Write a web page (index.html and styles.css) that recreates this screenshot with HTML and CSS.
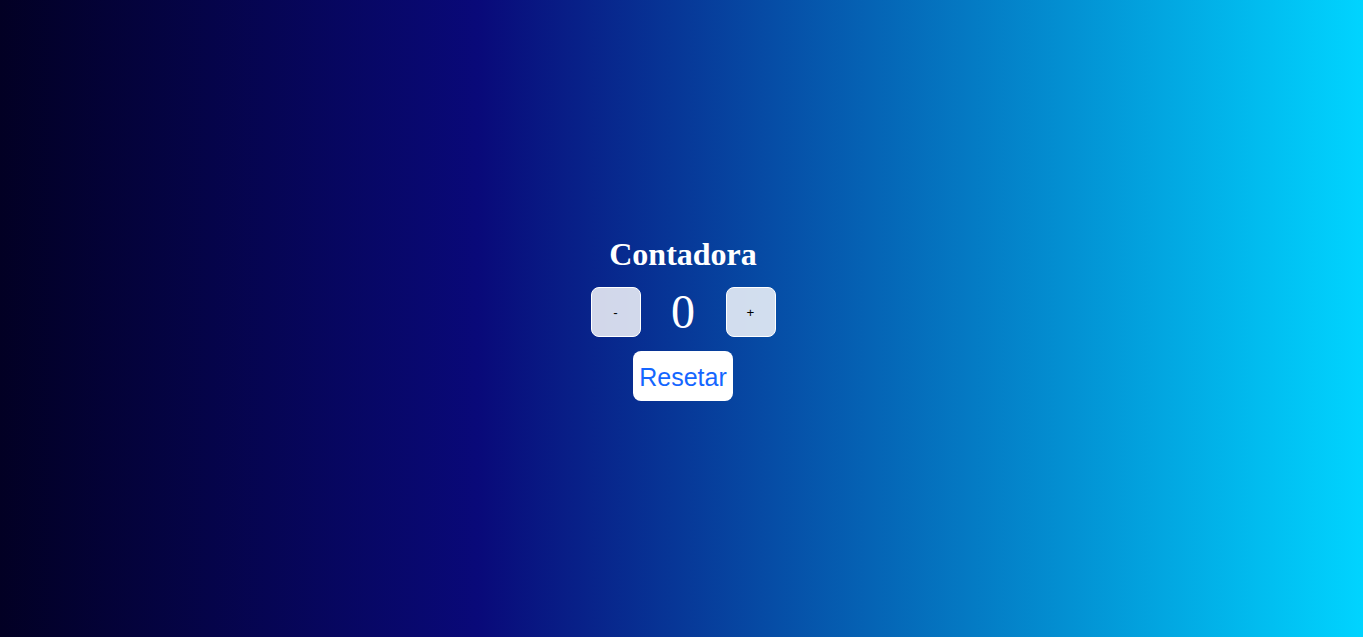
FILE: index.html
```html
<!DOCTYPE html>
<html lang="pt-BR">
<head>
<meta charset="utf-8">
<title>Contadora</title>
<link rel="stylesheet" href="styles.css">
</head>
<body>
  <main class="counter">
    <h1 class="title">Contadora</h1>
    <div class="controls">
      <button class="step">-</button>
      <span class="value">0</span>
      <button class="step">+</button>
    </div>
    <button class="reset">Resetar</button>
  </main>
</body>
</html>
```

FILE: styles.css
```css
html, body {
  margin: 0;
  height: 100%;
}

body {
  background: linear-gradient(90deg, #020024 0%, #090979 35%, #00d4ff 100%);
  font-family: "Liberation Serif", "Times New Roman", serif;
  color: #fff;
}

.counter {
  min-height: 100vh;
  box-sizing: border-box;
  padding-left: 3px;
  display: flex;
  flex-direction: column;
  align-items: center;
  justify-content: center;
  gap: 14px;
}

.title {
  margin: 0;
  font-size: 32px;
  line-height: 37px;
  font-weight: bold;
}

.controls {
  display: flex;
  align-items: center;
  gap: 30.5px;
  height: 50px;
}

.step {
  width: 50px;
  height: 50px;
  padding: 0;
  border: 1px solid #fff;
  border-radius: 8px;
  background: rgba(255, 255, 255, 0.82);
  color: #000;
  font-family: "Liberation Sans", Arial, sans-serif;
  font-size: 13.33px;
}

.value {
  font-size: 48px;
  line-height: 50px;
  width: 24px;
  text-align: center;
}

.reset {
  width: 100px;
  height: 50px;
  padding: 0;
  border: none;
  border-radius: 8px;
  background: #fff;
  color: #1466ff;
  font-family: "Liberation Sans", Arial, sans-serif;
  font-size: 25px;
  line-height: 52px;
}
```
